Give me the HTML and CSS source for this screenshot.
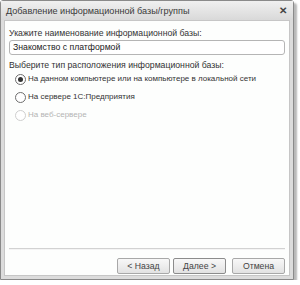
FILE: index.html
```html
<!DOCTYPE html>
<html>
<head>
  <title>Добавление информационной базы/группы</title>
  <link rel="stylesheet" href="styles.css">
</head>
<body>
  <div class="window">
    <div class="titlebar">
      <span class="title">Добавление информационной базы/группы</span>
      <span class="close">&#10005;</span>
    </div>
    <div class="content">
      <div class="label">Укажите наименование информационной базы:</div>
      <div class="input">Знакомство с платформой</div>

      <div class="label second">Выберите тип расположения информационной базы:</div>
      <div class="options">
        <div class="option"><span class="radio checked"></span>На данном компьютере или на компьютере в локальной сети</div>
        <div class="option"><span class="radio"></span>На сервере 1С:Предприятия</div>
        <div class="option disabled"><span class="radio"></span>На веб-сервере</div>
      </div>

      <div class="spacer"></div>
      <div class="separator"></div>
      <div class="buttons">
        <button>&lt; Назад</button>
        <button class="active">Далее &gt;</button>
        <button class="cancel">Отмена</button>
      </div>
    </div>
  </div>
</body>
</html>
```

FILE: styles.css
```css
body {
  margin: 0;
  background-color: #fff;
  font-family: 'Liberation Sans', Arial, sans-serif;
  font-size: 8.7px;
  color: #333;
}

.window {
  width: 292px;
  height: 278px;
  background-color: #dcdcdc;
  border: 1px solid #8a8a8a;
  border-radius: 3px 3px 0 0;
  box-shadow: 3px 3px 2px #b8b8b8;
  display: flex;
  flex-direction: column;
}

.titlebar {
  height: 19px;
  display: flex;
  align-items: center;
  padding: 0 6px 0 5px;
  background: linear-gradient(#f0f0f0, #d9d9d9);
}

.title {
  flex: 1;
  font-size: 9.1px;
  color: #3a3a3a;
}

.close {
  font-size: 10px;
  font-weight: bold;
  color: #444;
}

.content {
  flex: 1;
  margin: 0 3px 3px 3px;
  background-color: #fdfefd;
  border: 1px solid #c6c6c6;
  display: flex;
  flex-direction: column;
  padding: 6px 4px 1px 4px;
}

.label {
  height: 12px;
  line-height: 12px;
}

.second {
  margin-top: 4px;
}

.input {
  margin-top: 1px;
  height: 13px;
  line-height: 13px;
  border: 1px solid #b5b5b5;
  border-radius: 3px;
  padding: 0 3px;
  color: #222;
  background-color: #fff;
}

.options {
  display: flex;
  flex-direction: column;
  gap: 4px;
  margin-top: 1px;
  padding-left: 6px;
  font-size: 8px;
}

.option {
  display: flex;
  align-items: center;
  height: 14px;
  line-height: 14px;
}

.radio {
  width: 9px;
  height: 9px;
  border: 1px solid #6e6e6e;
  border-radius: 50%;
  margin-right: 2px;
  display: flex;
  justify-content: center;
  align-items: center;
  background-color: #fff;
}

.radio.checked::after {
  content: "";
  width: 5px;
  height: 5px;
  border-radius: 50%;
  background-color: #333;
}

.disabled {
  color: #b4b4b4;
}

.disabled .radio {
  border-color: #cfcfcf;
}

.spacer {
  flex: 1;
}

.separator {
  height: 1px;
  background-color: #d2d2d2;
  border-bottom: 1px solid #f4f4f4;
}

.buttons {
  display: flex;
  justify-content: flex-end;
  gap: 3px;
  margin-top: 8px;
}

button {
  width: 53px;
  height: 16px;
  padding: 0;
  font-family: 'Liberation Sans', Arial, sans-serif;
  font-size: 8.7px;
  color: #444;
  background: linear-gradient(#f8f8f8, #e2e2e2);
  border: 1px solid #a8a8a8;
  border-radius: 2px;
}

button.active {
  border-color: #8c8c8c;
}

button.cancel {
  margin-left: 3px;
}
```
